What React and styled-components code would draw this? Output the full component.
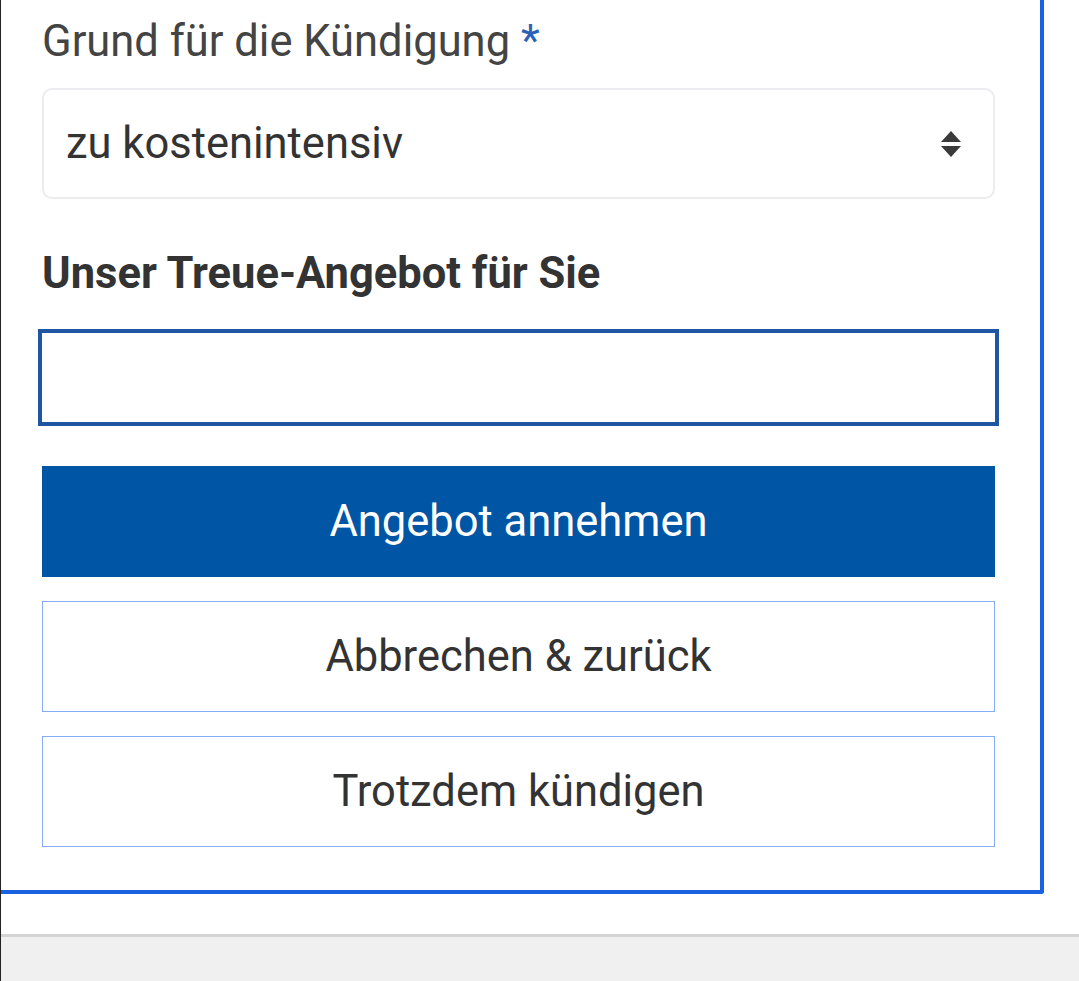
import React from 'react';
import styled, { createGlobalStyle } from 'styled-components';

const Global = createGlobalStyle`
	html, body {
		margin: 0;
		padding: 0;
		background: #fff;
	}
	body {
		font-family: Roboto, "Liberation Sans", Arial, sans-serif;
	}
`;

const Page = styled.div`
	width: 1079px;
	height: 981px;
	box-sizing: border-box;
	border-left: 1px solid #222;
	display: flex;
	flex-direction: column;
	overflow: hidden;
`;

const Card = styled.div`
	width: 1044px;
	box-sizing: border-box;
	margin-left: -1px;
	padding: 17px 45px 43px 42px;
	border-right: 4px solid #1a63e0;
	border-bottom: 4px solid #1a63e0;
	border-bottom-right-radius: 3px;
	display: flex;
	flex-direction: column;
`;

const Label = styled.label`
	font-size: 43.5px;
	color: #444;
	line-height: 50px;
	margin-bottom: 21px;
`;

const Star = styled.span`
	color: #2b62b8;
`;

const SelectBox = styled.div`
	height: 111px;
	box-sizing: border-box;
	border: 2px solid #ececf0;
	border-radius: 10px;
	display: flex;
	align-items: center;
	justify-content: space-between;
	padding: 0 31px 0 22px;
	font-size: 43.5px;
	color: #333;
`;

const Heading = styled.h3`
	margin: 50px 0 30px;
	font-size: 43.5px;
	font-weight: 700;
	color: #333;
	line-height: 50px;
`;

const TextInput = styled.input`
	height: 97px;
	box-sizing: border-box;
	margin: 0 -4px 40px -4px;
	border: 4px solid #1e56a2;
	outline: none;
	font-size: 40px;
	padding: 0 20px;
	background: #fff;
`;

const Button = styled.button`
	height: 111px;
	box-sizing: border-box;
	font-family: inherit;
	font-size: 43.5px;
	cursor: pointer;
	padding: 0;
	border: ${p => (p.$primary ? 'none' : '1px solid #86acf6')};
	background: ${p => (p.$primary ? '#0055a4' : '#fff')};
	color: ${p => (p.$primary ? '#fff' : '#333')};
	margin-bottom: 24px;
	&:last-child {
		margin-bottom: 0;
	}
`;

const Footer = styled.div`
	margin-top: 40px;
	flex: 1;
	background: #f0f0f0;
	border-top: 3px solid #d4d4d4;
`;

const SortIcon = () => (
	<svg width="22" height="28" viewBox="0 0 22 28">
		<path d="M11 1 L21 12 L1 12 Z" fill="#3a3a3a" />
		<path d="M1 16 L21 16 L11 27 Z" fill="#3a3a3a" />
	</svg>
);

const App = () => (
	<Page>
		<Global />
		<Card>
			<Label>
				Grund für die Kündigung <Star>*</Star>
			</Label>
			<SelectBox>
				<span>zu kostenintensiv</span>
				<SortIcon />
			</SelectBox>
			<Heading>Unser Treue-Angebot für Sie</Heading>
			<TextInput type="text" />
			<Button $primary>Angebot annehmen</Button>
			<Button>Abbrechen &amp; zurück</Button>
			<Button>Trotzdem kündigen</Button>
		</Card>
		<Footer />
	</Page>
);

export default App;
